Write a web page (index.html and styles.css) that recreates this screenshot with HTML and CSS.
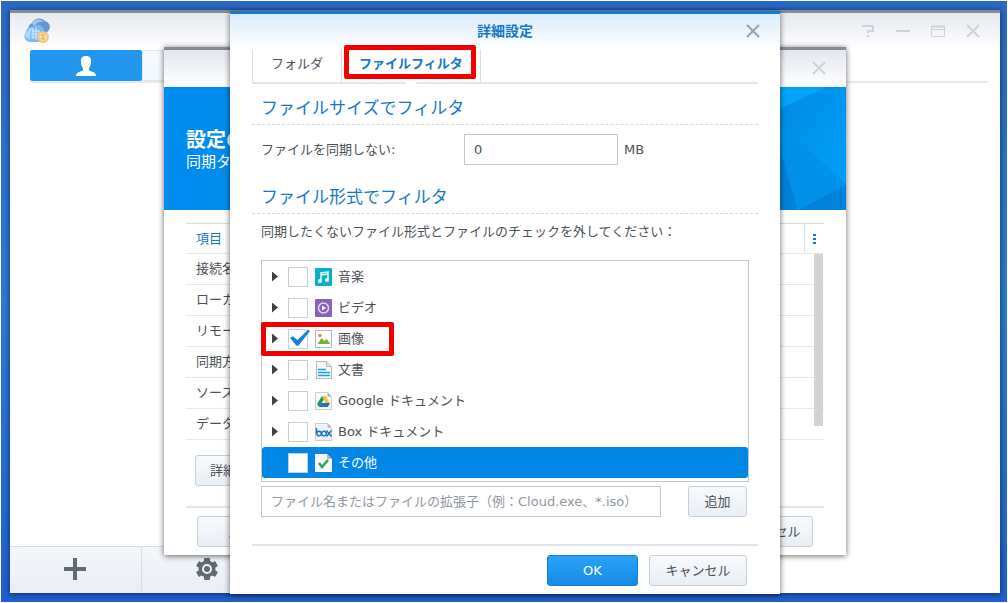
FILE: index.html
```html
<!DOCTYPE html>
<html lang="ja">
<head>
<meta charset="utf-8">
<title>詳細設定</title>
<link rel="stylesheet" href="styles.css">
</head>
<body>
<div class="desktop">
  <main class="window app">
    <header class="app-header">
      <svg class="app-logo" width="28" height="26" viewBox="0 0 28 26" aria-hidden="true">
        <path d="M6 13a6 6 0 0 1 3-8 8 8 0 0 1 13-2 6 6 0 0 1 4 9l-3 3z" fill="#6396d2"/>
        <path d="M9 6a7 7 0 0 1 12-2q-7-1-9 4z" fill="#a3c8ec"/>
        <path d="M7 24a6 6 0 0 1-4-10 5 5 0 0 1 6-5 7 7 0 0 1 12 3l1 12z" fill="#79baf0"/>
        <path d="M2 18a5 5 0 0 1 3-5 5 5 0 0 1 6-3q-5 3-4 12z" fill="#a9dafa"/>
        <path d="M9 13h7M8 16h9M8 19h8M10 11v10M13 10v12M16 12v7" stroke="#d8f0ff" fill="none"/>
        <circle cx="20" cy="19" r="6" fill="#eec47d"/>
        <circle cx="20" cy="19" r="4" fill="#f8dca2"/>
        <path d="M18 17h4M18 21h4M20 17v4" stroke="#dfa756" fill="none"/>
      </svg>
      <div class="window-tools">
        <button type="button" aria-label="ヘルプ"><svg width="14" height="14" viewBox="0 0 14 14"><path d="M1 2h11v5H7v2M7 11v2" fill="none" stroke="currentColor" stroke-width="2"/></svg></button>
        <button type="button" aria-label="最小化"><svg width="14" height="14" viewBox="0 0 14 14"><path d="M0 7h14" stroke="currentColor" stroke-width="2"/></svg></button>
        <button type="button" aria-label="最大化"><svg width="14" height="14" viewBox="0 0 14 14"><path d="M.5 2.500h13v10H.5zM.5 5.500h13" fill="none" stroke="currentColor"/><path d="M0 2.500h14" stroke="currentColor" stroke-width="2"/></svg></button>
        <button type="button" aria-label="閉じる"><svg width="14" height="14" viewBox="0 0 14 14"><path d="M1 1l12 12M13 1L1 13" stroke="currentColor" stroke-width="2"/></svg></button>
      </div>
    </header>
    <div class="app-tabs">
      <button class="user-tab" type="button" aria-label="ユーザー">
        <svg width="20" height="20" viewBox="0 0 20 20"><path d="M10 0c4 0 5.500 2.500 5 6 0 3-1 5-2 6v2c1 2 7 1 7 6H0c0-5 6-4 7-6v-2C6 11 5 9 5 6c-.5-3.500 1-6 5-6z" fill="#fff"/></svg>
      </button>
      <div class="tab-rest"></div>
    </div>
    <div class="app-body"></div>
    <footer class="app-footer">
      <button type="button" aria-label="追加する"><svg width="22" height="22" viewBox="0 0 22 22"><path d="M11 0v22M0 11h22" stroke="#626a72" stroke-width="4"/></svg></button>
      <button type="button" aria-label="設定"><svg width="22" height="22" viewBox="-11 -11 22 22"><g fill="#626a72"><circle r="8.500"/><rect x="-3" y="-11" width="6" height="22" rx="1"/><rect x="-3" y="-11" width="6" height="22" rx="1" transform="rotate(60)"/><rect x="-3" y="-11" width="6" height="22" rx="1" transform="rotate(120)"/></g><circle r="4" fill="none" stroke="#eef2f7" stroke-width="2"/></svg></button>
    </footer>

    <section class="window wizard">
      <header class="wizard-header">
        <button class="close" type="button" aria-label="閉じる"><svg width="14" height="14" viewBox="0 0 14 14"><path d="M1 1l12 12M13 1L1 13" stroke="currentColor" stroke-width="2"/></svg></button>
      </header>
      <div class="banner">
        <div class="banner-text">
          <h1>設定の</h1>
          <p>同期タスク</p>
        </div>
        <svg class="banner-art" width="100" height="123" viewBox="0 0 100 123" aria-hidden="true">
          <defs><linearGradient id="facet" x1="0" y1="0" x2="1" y2="1"><stop offset="0" stop-color="#008be6"/><stop offset="1" stop-color="#009ff7"/></linearGradient></defs>
          <path d="M0 0h81L34 22 0 38z" fill="#00a5f9"/>
          <path d="M81 0h19v97L34 37V22z" fill="url(#facet)"/>
          <path d="M34 37l66 60v2l-46 24h-2L34 63z" fill="#0091ea"/>
          <path d="M0 38l34-3v28l18 60H0z" fill="#0082da"/>
          <path d="M100 98v25H53z" fill="#0081da"/>
        </svg>
      </div>
      <div class="wizard-body">
        <div class="summary">
          <table>
            <thead><tr><th>項目</th><th></th><th class="more"><button type="button" aria-label="列"><i></i><i></i><i></i></button></th></tr></thead>
            <tbody>
              <tr><td colspan="3">接続名</td></tr>
              <tr><td colspan="3">ローカル</td></tr>
              <tr><td colspan="3">リモート</td></tr>
              <tr><td colspan="3">同期方向</td></tr>
              <tr><td colspan="3">ソース</td></tr>
              <tr><td colspan="3">データ</td></tr>
            </tbody>
          </table>
          <div class="scroll-thumb"></div>
        </div>
        <button class="btn detail-btn" type="button">詳細設定</button>
        <div class="wizard-actions">
          <button class="btn" type="button">戻る</button>
          <button class="btn" type="button">キャンセル</button>
        </div>
      </div>
    </section>

    <section class="window dialog" role="dialog" aria-labelledby="dialog-title">
      <header class="dialog-header">
        <h2 id="dialog-title">詳細設定</h2>
        <button class="close" type="button" aria-label="閉じる"><svg width="14" height="14" viewBox="0 0 14 14"><path d="M1 1l12 12M13 1L1 13" stroke="currentColor" stroke-width="2"/></svg></button>
      </header>
      <div class="dialog-body">
        <nav class="tabs">
          <button class="tab" type="button">フォルダ</button>
          <button class="tab tab-active" type="button">ファイルフィルタ</button>
        </nav>
        <h3>ファイルサイズでフィルタ</h3>
        <div class="size-row">
          <label for="size">ファイルを同期しない:</label>
          <input class="field" id="size" type="text" value="0">
          <span>MB</span>
        </div>
        <h3>ファイル形式でフィルタ</h3>
        <p class="hint">同期したくないファイル形式とファイルのチェックを外してください：</p>
        <ul class="tree">
          <li><button class="expand" type="button" aria-label="展開"></button><label><input type="checkbox"><svg width="18" height="18" viewBox="0 0 18 18"><rect x="1" width="17" height="18" rx="1" fill="#0db1c7"/><path d="M7 13V5l7-1v8M7 7l7-1" fill="none" stroke="#e8fbff" stroke-width="1.500"/><circle cx="6" cy="13" r="2" fill="#e8fbff"/><circle cx="13" cy="12" r="2" fill="#e8fbff"/></svg>音楽</label></li>
          <li><button class="expand" type="button" aria-label="展開"></button><label><input type="checkbox"><svg width="18" height="18" viewBox="0 0 18 18"><rect x="1" width="17" height="18" rx="1" fill="#8a62bd"/><circle cx="9.500" cy="9" r="5" fill="none" stroke="#e6d6fa" stroke-width="1.500"/><path d="M8 6.500v5L12 9z" fill="#fff"/></svg>ビデオ</label></li>
          <li class="marked"><button class="expand" type="button" aria-label="展開"></button><label><input type="checkbox" checked><svg width="18" height="18" viewBox="-1 0 18 18"><rect x=".5" y=".5" width="16" height="17" fill="#fff" stroke="#aeb8c0"/><circle cx="5" cy="5.500" r="1.800" fill="#f08b32"/><path d="M2.500 14l4-6 3 3 2-2 4 5z" fill="#79b530"/></svg>画像</label></li>
          <li><button class="expand" type="button" aria-label="展開"></button><label><input type="checkbox"><svg width="18" height="18" viewBox="-1 0 18 18"><path d="M1.500 .5h10l5 5v12h-15z" fill="#f7f9fb" stroke="#aeb8c0"/><path d="M11.500 .5v5h5" fill="#dbe1e6" stroke="#aeb8c0"/><path d="M3 8.500h8M3 11.500h12M3 14.500h12" stroke="#17a1ce" stroke-width="1.500"/></svg>文書</label></li>
          <li><button class="expand" type="button" aria-label="展開"></button><label><input type="checkbox"><svg width="18" height="18" viewBox="-1 0 18 18"><path d="M.5 .5h12l4 4v13H.5z" fill="#f7f9fb" stroke="#c5ccd2"/><path d="M12.500 .5v4h4z" fill="#aab2ba"/><path d="M7 4L2 12l2 3 5-8z" fill="#189b58"/><path d="M7 4h4l4 8h-4z" fill="#f5c52c"/><path d="M6 11h9l-2 4H4z" fill="#2470d0"/></svg>Google ドキュメント</label></li>
          <li><button class="expand" type="button" aria-label="展開"></button><label><input type="checkbox"><svg width="18" height="18" viewBox="-1 0 18 18"><path d="M.5 .5h12l4 4v13H.5z" fill="#f0f4f8" stroke="#c5ccd2"/><path d="M12.500 .5v4h4z" fill="#aab2ba"/><g fill="none" stroke="#1b78b4" stroke-width="1.500"><path d="M1.500 5v6M11.500 7.500l5 6M16.500 7.500l-5 6"/><circle cx="4" cy="10.500" r="2.300"/><circle cx="9" cy="10.500" r="2.300"/></g></svg>Box ドキュメント</label></li>
          <li class="selected"><span class="expand-gap"></span><label><input type="checkbox"><svg width="18" height="18" viewBox="-1 0 18 18"><path d="M0 0h12l5 5v13H0z" fill="#f5f7f9"/><path d="M12 0v5h5z" fill="#a9b6c2"/><path d="M4 9l3 4 6-7" fill="none" stroke="#30a260" stroke-width="2.500"/></svg>その他</label></li>
        </ul>
        <div class="add-row">
          <input class="field" type="text" aria-label="ファイル名" placeholder="ファイル名またはファイルの拡張子（例：Cloud.exe、*.iso）">
          <button class="btn" type="button">追加</button>
        </div>
        <footer class="dialog-actions">
          <button class="btn btn-primary" type="button">OK</button>
          <button class="btn" type="button">キャンセル</button>
        </footer>
      </div>
    </section>
  </main>
</div>
</body>
</html>
```
FILE: styles.css
```css
*,
*::before,
*::after {
  box-sizing: border-box;
}

body {
  margin: 0;
  background: #fff;
  color: #4b5157;
  font-family: "DejaVu Sans", "Noto Sans CJK JP", sans-serif;
  font-size: 13px;
  line-height: 20px;
}

h1, h2, h3, p, ul {
  margin: 0;
  padding: 0;
}

button, input {
  margin: 0;
  font: inherit;
  color: inherit;
}

button {
  padding: 0;
  border: 0;
  background: none;
}

svg {
  display: block;
  flex: none;
}

.desktop {
  display: flex;
  min-height: calc(100vh - 2px);
  margin: 1px;
  padding: 9px 7px 9px 9px;
  background: linear-gradient(#2b68c4, #2c7bd4 50%, #2160d0);
}

.window {
  background: #fff;
  border-top: 3px solid #868b97;
  box-shadow: 0 1px 6px rgba(0, 0, 0, 0.6);
}

.app {
  position: relative;
  display: flex;
  flex: 1;
  flex-direction: column;
}

.app-header {
  display: flex;
  align-items: center;
  justify-content: space-between;
  height: 37px;
  padding: 0 20px 2px 13px;
  background: linear-gradient(#e6e9f0, #fff);
}

.window-tools {
  display: flex;
  gap: 21px;
  color: #d0d2d7;
}

.app-tabs {
  display: flex;
  height: 33px;
  margin: 0 12px 0 20px;
  border-bottom: 2px solid #e9eaec;
}

.user-tab {
  display: grid;
  place-items: center;
  width: 112px;
  height: 31px;
  background: #2196ec;
  border-radius: 2px;
}

.tab-rest {
  width: 112px;
  height: 31px;
  background: #f3f9fd;
  border: 1px solid #dde9f1;
}

.app-body {
  flex: 1;
}

.app-footer {
  display: flex;
  width: 264px;
  height: 47px;
  background: linear-gradient(#f4f7fa, #e9eef4);
  border-top: 1px solid #d5dfe8;
}

.app-footer button {
  display: grid;
  flex: 1;
  place-items: center;
  padding: 0 1px 3px 0;
  border-right: 1px solid #d5dfe8;
}

.wizard,
.dialog {
  position: absolute;
  right: 0;
  left: 0;
  margin: 0 auto;
}

.wizard {
  top: 34px;
  width: 682px;
}

.wizard-header {
  display: flex;
  align-items: center;
  justify-content: flex-end;
  height: 37px;
  padding: 0 20px 2px;
  background: linear-gradient(#e3e7ef, #fff);
}

.close {
  color: #9ca3ae;
}

.wizard .close {
  color: #d0d2d7;
}

.banner {
  display: flex;
  align-items: center;
  justify-content: space-between;
  height: 123px;
  padding-left: 22px;
  background: #008cee;
  color: #fff;
}

.banner-text {
  padding-top: 3px;
}

.banner h1 {
  font-size: 20px;
  line-height: 24px;
}

.banner p {
  font-size: 15px;
}

.wizard-body {
  padding: 13px 22px 8px;
}

.summary {
  position: relative;
}

.summary table {
  width: 100%;
  border-collapse: collapse;
  border-top: 1px solid #d9dcdf;
}

.summary th,
.summary td {
  height: 31px;
  padding: 0 10px;
  border-bottom: 1px solid #e5e7e9;
  text-align: left;
}

.summary th {
  height: 30px;
  color: #1478c8;
  font-weight: 400;
}

.summary .more {
  width: 19px;
  padding: 0 8px;
  border-left: 1px solid #d4e6f3;
}

.more button {
  display: grid;
  gap: 2px;
}

.more i {
  width: 3px;
  height: 2px;
  background: #1478c8;
}

.scroll-thumb {
  position: absolute;
  top: 31px;
  right: 1px;
  width: 9px;
  height: 172px;
  background: #d2d3d5;
}

.btn {
  height: 31px;
  background: linear-gradient(#f8fafc, #e9eff5);
  border: 1px solid #c3cfd9;
  border-radius: 3px;
}

.detail-btn {
  display: block;
  width: 82px;
  margin: 15px 9px 20px;
}

.wizard-actions {
  display: flex;
  justify-content: space-between;
  padding: 8px 11px 0;
  border-top: 2px solid #e5e5e7;
}

.wizard-actions .btn {
  width: 90px;
}

.dialog {
  top: -2px;
  width: 550px;
  border-top-color: #167bca;
}

.dialog-header {
  display: flex;
  align-items: center;
  height: 36px;
  padding: 0 20px 2px 34px;
  background: linear-gradient(#d9ecfb, #fff);
}

.dialog-header h2 {
  flex: 1;
  color: #1478c8;
  font-size: 14px;
  text-align: center;
}

.dialog-body {
  padding: 0 22px 8px;
}

.tabs {
  display: flex;
  border-bottom: 2px solid #e5e5e7;
}

.tab {
  position: relative;
  height: 32px;
  padding: 0 18px 4px;
  border-left: 1px solid #dcdee1;
}

.tab-active {
  padding: 0 17px 4px;
  border-right: 1px solid #dcdee1;
  color: #1478c8;
  font-weight: 700;
}

.tab-active::before {
  content: "";
  position: absolute;
  bottom: -2px;
  left: 50%;
  width: 12px;
  height: 6px;
  margin-left: -6px;
  background: #fff;
  clip-path: polygon(50% 0, 100% 100%, 0 100%);
}

.tab-active::after,
.marked::after {
  content: "";
  position: absolute;
  border: 5px solid #f00000;
  border-radius: 2px;
  pointer-events: none;
}

.tab-active::after {
  inset: -5px 4px 3px 2px;
}

.dialog h3 {
  height: 41px;
  padding: 12px 9px 0;
  border-bottom: 1px dashed #d5d8da;
  color: #1478c8;
  font-size: 17px;
  font-weight: 400;
  line-height: 24px;
}

.size-row {
  display: flex;
  align-items: center;
  padding: 9px 9px 8px;
}

.size-row label {
  width: 203px;
}

.size-row span {
  padding-left: 6px;
}

.field {
  height: 31px;
  padding: 0 9px;
  background: #fff;
  border: 1px solid #bfc9d2;
}

.field::placeholder {
  color: #9097a0;
  opacity: 1;
}

.size-row .field {
  width: 154px;
}

.hint {
  padding: 8px 9px 18px;
}

.tree {
  margin: 0 9px;
  padding: 0 0 3px;
  border: 1px solid #bfc9d2;
  list-style: none;
}

.tree li {
  position: relative;
  display: flex;
  align-items: center;
  height: 31px;
  padding-left: 10px;
  border-radius: 3px;
}

.tree label {
  display: flex;
  flex: 1;
  align-items: center;
  gap: 6px;
  padding-left: 10px;
}

.expand,
.expand-gap {
  width: 6px;
  height: 10px;
}

.expand {
  background: #3e4347;
  clip-path: polygon(0 0, 100% 50%, 0 100%);
}

.tree input {
  position: relative;
  width: 20px;
  height: 20px;
  appearance: none;
  background: #fff;
  border: 1px solid #c5ced7;
}

.tree input:checked::before {
  content: "";
  position: absolute;
  top: 0;
  left: 1px;
  width: 20px;
  height: 17px;
  background: #1382dc;
  clip-path: polygon(0 48%, 15% 40%, 37% 62%, 90% 2%, 100% 9%, 42% 96%, 32% 96%);
}

.selected {
  background: #0086e5;
  color: #fff;
}

.marked::after {
  top: -1px;
  left: -1px;
  width: 133px;
  height: 34px;
}

.add-row {
  display: flex;
  justify-content: space-between;
  padding: 4px 11px 27px 9px;
}

.add-row .field {
  width: 400px;
}

.add-row .btn {
  width: 59px;
}

.dialog-actions {
  display: flex;
  justify-content: flex-end;
  gap: 11px;
  padding: 9px 11px 0 0;
  border-top: 2px solid #e5e5e7;
}

.dialog-actions .btn {
  width: 98px;
}

.dialog-actions .btn-primary {
  width: 91px;
  background: linear-gradient(#2ba1f7, #158be5);
  border-color: #1582d4;
  color: #fff;
}
```
